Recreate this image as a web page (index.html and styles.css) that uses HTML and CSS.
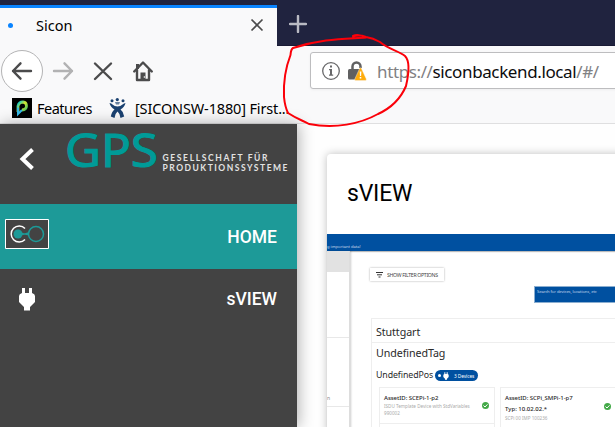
FILE: index.html
```html
<!DOCTYPE html>
<html lang="en">
<head>
<meta charset="utf-8">
<title>Sicon</title>
<link rel="stylesheet" href="styles.css">
</head>
<body>
<header class="chrome">
  <div class="tabs">
    <div class="tab"><i class="loading"></i><span class="tab-title">Sicon</span>
      <svg class="close" width="14" height="14" viewBox="0 0 14 14"><path d="M1.500 1.500l11 11M12.500 1.500l-11 11"/></svg>
    </div>
    <svg class="plus" width="18" height="18" viewBox="0 0 18 18"><path d="M9 1v16M1 9h16"/></svg>
  </div>
  <div class="toolbar">
    <div class="nav">
      <svg width="160" height="44" viewBox="0 0 160 44">
        <circle cx="22" cy="22" r="20.500" fill="#fff" stroke="#b4b4b5"/>
        <g fill="none" stroke="#4b4b4c" stroke-width="2.400" stroke-linecap="round" stroke-linejoin="round">
          <path d="M31 22H13M20.500 14.300L13 22l7.500 7.700"/>
          <path stroke="#b2b2b3" d="M54 22h18M64.500 14.300L72 22l-7.500 7.700"/>
          <path d="M95 14.500l16 15.500M111 14.500L95 30"/>
          <path d="M134.200 22.500L143 13.500l8.800 9M137 21v10h12V21"/>
        </g>
        <path d="M136 15h3v5h-3zM140.500 23.500h5V31h-5z" fill="#4b4b4c"/><path d="M143.800 27h1v2h-1z" fill="#ddd"/>
      </svg>
    </div>
    <div class="address">
      <svg width="45" height="24" viewBox="0 0 45 24">
        <circle cx="9" cy="12" r="8.300" fill="none" stroke="#68686a" stroke-width="1.300"/>
        <path d="M7 10h3v5.500h1.200v1.300H7v-1.300h1v-4.300H7zM8 6.500h2v2H8z" fill="#68686a"/>
        <path d="M30.500 11V7.500a4 4 0 0 1 8 0V9" fill="none" stroke="#606061" stroke-width="2.500"/>
        <rect x="26" y="10" width="13" height="10.500" rx="1.500" fill="#606061"/>
        <path d="M37.700 9.300q.8-1 1.600 0l5 10.700q.3 1.500-1 1.500h-9.500q-1.500 0-1-1.500z" fill="#ffac0c" stroke="#f7f7f7" stroke-width=".4"/>
        <path d="M37.700 12.500h1.700l-.3 4.500H38zM37.700 18h1.600v1.600h-1.600z" fill="#fff"/>
      </svg>
      <span class="url">https://<b>siconbackend.local</b>/#/</span>
    </div>
  </div>
  <div class="bookmarks">
    <svg width="20" height="20" viewBox="0 0 20 20"><defs><linearGradient id="p" x1="0" y1="0" x2="1" y2="1"><stop stop-color="#00c7d8"/><stop offset=".45" stop-color="#d6e82b"/><stop offset="1" stop-color="#27b874"/></linearGradient></defs><path d="M0 0h20v20H0z"/><path d="M6 14V8q1-4 5-4 3.500.3 3.500 4T10 12" fill="none" stroke="url(#p)" stroke-width="2.800"/><path d="M6 9.500V16l4-4" fill="none" stroke="#35b9e7" stroke-width="2"/></svg>
    <span class="features">Features</span>
    <svg class="jira" width="17" height="20" viewBox="0 0 17 20" fill="#1a4170"><circle cx="3" cy="2.700" r="1.500"/><circle cx="8.300" cy="1.600" r="1.600"/><circle cx="14" cy="2.700" r="1.500"/><path d="M.5 5q2 0 3 1.500 2 2 5 2t5-2Q15 5 16.500 5q-1 4-5 6.500 2 1.500 3 5l.7 2-3.700 1.500q-.5-4.500-3-6.500-2.500 2-3 6.500l-3.700-1.500q1-5 3.700-7Q1.500 9 .5 5z"/><path d="M6 4h5l-1 2.500H7z" opacity=".65"/></svg>
    <span class="ticket">[SICONSW-1880] First...</span>
  </div>
</header>
<div class="page">
  <aside>
    <div class="brand">
      <svg width="297" height="80" viewBox="0 0 297 80">
        <path d="M32.500 25.500L22.500 35l10 9.500" fill="none" stroke="#fff" stroke-width="4"/>
        <text class="gps" x="65" y="43" textLength="93" lengthAdjust="spacingAndGlyphs">GPS</text>
        <g class="company"><text x="162.500" y="36.500" textLength="105">GESELLSCHAFT FÜR</text><text x="162.500" y="47" textLength="125">PRODUKTIONSSYSTEME</text></g>
      </svg>
    </div>
    <a class="item active"><svg width="44" height="30" viewBox="0 0 44 30"><path d="M.5.500h43v29H.5z" fill="#434343" stroke="#fff"/><path d="M20 9.500A8 8 0 1 0 20 20.500" fill="none" stroke="#fff" stroke-width="1.500"/><circle cx="13" cy="15" r="4.500" fill="#1d9a98"/><path d="M13 10.500q3 4 7 3.800t6-3v7.400q-2-2.800-6-3t-7 3.800" fill="#1d9a98"/><circle cx="31" cy="15" r="7.500" fill="#434343" stroke="#1d9a98" stroke-width="1.500"/></svg><span>HOME</span></a>
    <a class="item second"><svg class="plug" width="16" height="24" viewBox="0 0 16 24"><path d="M3 1h3v5h4V1h3v5q3 1 3 3v6l-5 5v3.500H5V20l-5-5V9q0-2 3-3z" fill="#fff"/></svg><span>sVIEW</span></a>
  </aside>
  <main>
    <section class="card">
      <h1>sVIEW</h1>
      <div class="preview">
        <div class="notice">g important data!</div>
        <div class="body">
          <div class="side"><div class="gray"></div><div class="one"></div><div class="two">n</div></div>
          <div class="content">
            <div class="filter"><svg width="7" height="6" viewBox="0 0 7 6"><path d="M0 .5h7M1 2.800h5M2.500 5h2" stroke="#333"/></svg><svg class="filter-text" width="54" height="9"><text x="0" y="6.500" textLength="51">SHOW FILTER OPTIONS</text></svg></div>
            <div class="search">Search for devices, locations, etc</div>
            <div class="results">
              <div class="city"><span>Stuttgart</span></div>
              <div class="tag"><span>UndefinedTag</span></div>
              <div class="pos"><span class="pos-name">UndefinedPos</span><div class="badge"><i></i><svg width="6" height="8" viewBox="0 0 16 24"><path d="M3 1h3v5h4V1h3v5q3 1 3 3v6l-5 5v3H5v-3l-5-5V9q0-2 3-3z" fill="#fff"/></svg><span>3 Devices</span></div></div>
              <div class="devices">
                <div class="device"><strong>AssetID: SCEPi-1-p2</strong><p>ISDU Template Device with StdVariables<br>990002</p><svg class="check" width="7" height="7" viewBox="0 0 7 7"><circle cx="3.500" cy="3.500" r="3.500" fill="#43a948"/><path d="M1.500 3.500L3 5l2.500-2.700" fill="none" stroke="#fff"/></svg></div>
                <div class="device wide"><strong>AssetID: SCPi_SMPi-1-p7</strong><em>Typ: 10.02.02.*</em><p>SCPi 00 IMP 100236</p><svg class="check" width="7" height="7" viewBox="0 0 7 7"><circle cx="3.500" cy="3.500" r="3.500" fill="#43a948"/><path d="M1.500 3.500L3 5l2.500-2.700" fill="none" stroke="#fff"/></svg></div>
              </div>
            </div>
          </div>
        </div>
      </div>
    </section>
  </main>
</div>
<svg class="marker" width="135" height="98" viewBox="280 31 135 98"><path d="M366 37.500Q358 33.500 353 36M366 37.500C345 39 322 38.500 293 48Q291 49 290.500 55C287 64 283 76 284 97Q285 107 288 113C297 119 304 121 309 124C335 129 360 124 378 114C391 108 401 98 406 86C409 73 410 61 405 56C399 51 388 49 380 42Q373 38 366 37Q359 34.500 353 36.500"/></svg>
</body>
</html>
```
FILE: styles.css
```css
* { box-sizing: border-box; }
body { margin: 0; width: 615px; height: 427px; overflow: hidden; background: #fff; font-family: "Noto Sans", sans-serif; }
.chrome { height: 124px; background: #f9f9fa; border-bottom: 1px solid #dfdfe0; }
.tabs { height: 46px; background: #20233f; display: flex; padding-top: 5px; border-bottom: 1px solid #191a35; }
.tab { width: 277px; height: 41px; flex: none; background: #f9f9fa; border-top: 3px solid #0a84ff; display: flex; align-items: center; padding: 0 13px 4px 8px; font-size: 14.5px; }
.loading { width: 5px; height: 5px; border-radius: 50%; background: #0a84ff; }
.tab-title { margin-left: 23px; }
.close { margin-left: auto; fill: none; stroke: #4b4b4c; stroke-width: 1.7; }
.plus { margin: 10px 0 0 12px; fill: none; stroke: #b9bac3; stroke-width: 2.4; stroke-linecap: round; }
.toolbar { height: 50px; display: flex; }
.nav { width: 310px; padding-top: 3px; flex: none; }
.address { flex: 1; height: 37px; margin-top: 6px; margin-right: -4px; background: #fff; border: 1px solid #bdbdbf; border-radius: 3px; box-shadow: 0 1px 3px #0000000d; display: flex; align-items: center; padding-left: 11px; }
.url { margin-left: 10px; padding-top: 1px; color: #818183; font-size: 17px; letter-spacing: -.38px; white-space: nowrap; }
.url b { color: #0c0c0d; font-weight: 400; }
.bookmarks { height: 27px; padding: 0 0 3px 12px; display: flex; align-items: center; font-size: 14.5px; white-space: nowrap; }
.features { margin-left: 5px; width: 72px; letter-spacing: -.5px; }
.ticket { margin-left: 9px; letter-spacing: -.15px; }
.page { height: 303px; display: flex; }
aside { width: 297px; flex: none; background: #434343; box-shadow: 2px 0 14px #0000004d; z-index: 1; }
.brand { height: 80px; }
.brand svg { display: block; overflow: visible; }
.gps { font: 45px "Noto Sans", sans-serif; fill: #009b98; stroke: #009b98; stroke-width: 1px; }
.company { font: 700 8.5px Lato, sans-serif; fill: #e2e2e2; }
.item { display: flex; align-items: center; height: 65px; padding: 0 20px 0 5px; color: #fff; font: 500 17.5px Roboto, sans-serif; }
.item span { margin-left: auto; }
.active { background: #1d9a98; padding-bottom: 5px; }
.active span { padding-top: 5px; }
.second { height: 60px; }
.plug { margin-left: 14px; }
main { flex: 1; padding: 30px 0 0 30px; min-width: 0; background: #fefefe; }
.card { width: 310px; height: 280px; background: #fff; border-radius: 4px 0 0; box-shadow: 0 0 8px #00000040; }
h1 { height: 80px; margin: 0; padding: 26px 20px; font: 400 23px/28px Roboto, sans-serif; letter-spacing: -.2px; color: #000; }
.notice { height: 17px; background: #0050a0; color: #c9daeb; font-size: 4.1px; line-height: 25px; box-shadow: 0 1px 1px #0004; overflow: hidden; }
.preview { color: #292929; }
.body { display: flex; height: 180px; }
.side { width: 23px; flex: none; border-right: 1px solid #ddd; box-shadow: 1px 0 2px #0003; }
.gray { height: 21px; background: #e2e2e2; }
.one { height: 66px; border-bottom: 1px solid #e8e8e8; }
.two { height: 69px; border-bottom: 1px solid #e8e8e8; font-size: 5px; line-height: 121px; color: #888; overflow: hidden; }
.content { flex: 1; padding: 17px 0 0 20px; min-width: 0; }
.filter { width: 74px; height: 13px; box-shadow: 0 0 2px #0005; display: flex; align-items: center; padding-left: 6px; gap: 4px; }
.filter-text { font: 5.2px "Noto Sans", sans-serif; fill: #444; }
.search { height: 17px; margin: 5px 0 0 164px; background: #0050a0; color: #c5d9ec; font-size: 4.1px; line-height: 10px; padding-left: 2px; letter-spacing: -.07px; white-space: nowrap; border: .5px solid #8baed0; }
.results { margin-top: 15px; margin-left: 1px; height: 115px; border-top: 1px solid #eee; border-left: 1px solid #eee; }
.city, .tag { padding-left: 4px; font-size: 10.7px; letter-spacing: -.08px; }
.city { height: 24px; line-height: 26px; border-bottom: 1px solid #eee; }
.tag { height: 20px; line-height: 20px; }
.pos { height: 24px; padding-left: 4px; display: flex; align-items: center; font-size: 8.8px; letter-spacing: -.1px; white-space: nowrap; }
.badge { width: 43px; height: 11px; margin: 1px 0 0 2px; border-radius: 6px; background: #0050a0; color: #fff; display: flex; align-items: center; padding-left: 3px; font-size: 4.8px; }
.badge i { width: 3px; height: 3px; border-radius: 50%; background: #fff; }
.badge svg { margin: 0 5px 0 2px; }
.devices { display: flex; gap: 5px; padding-left: 7px; }
.device { position: relative; width: 116px; height: 50px; border: 1px solid #eee; padding: 6px 4px; flex: none; }
.device::after { content: ""; display: block; height: 1px; background: #eee; margin: 6px -4px; }
.wide { width: 130px; }
.device strong { display: block; font-size: 6px; font-weight: 500; line-height: 9px; letter-spacing: -.05px; white-space: nowrap; }
.device em { display: block; font: 500 6px/12px "Noto Sans", sans-serif; }
.device p { margin: 0; color: #aaa; font-size: 4.6px; line-height: 7px; white-space: nowrap; }
.check { position: absolute; top: 14px; right: 5px; }
.wide .check { top: 15px; right: 18px; }
.marker { position: absolute; left: 280px; top: 31px; z-index: 2; fill: none; stroke: #fb0009; stroke-width: 2; stroke-linejoin: round; stroke-linecap: round; }
```
